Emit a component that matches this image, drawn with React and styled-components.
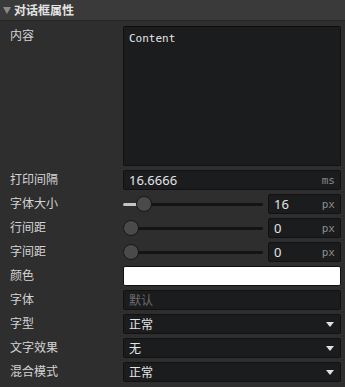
import React from "react";
import styled, { createGlobalStyle } from "styled-components";

const GlobalStyle = createGlobalStyle`
  html, body {
    margin: 0;
    padding: 0;
    background: #2e2e2e;
  }
  * { box-sizing: border-box; }
`;

const Panel = styled.div`
  width: 345px;
  height: 387px;
  background: #2e2e2e;
  font-family: "Noto Sans", "Noto Sans CJK SC", sans-serif;
  color: #d6d6d6;
`;

const Header = styled.div`
  height: 21px;
  display: flex;
  align-items: center;
  gap: 3px;
  padding-left: 3px;
  background: #3a3a3a;
  border-bottom: 1px solid #262626;
  font-size: 12px;
  font-weight: bold;
  color: #e4e4e4;
`;

const Caret = styled.span`
  width: 0;
  height: 0;
  border-left: 4.5px solid transparent;
  border-right: 4.5px solid transparent;
  border-top: 7px solid #8a8a8a;
`;

const Body = styled.div`
  display: flex;
  flex-direction: column;
  gap: 4px;
  padding: 5px 4px 0 10px;
`;

const Row = styled.div`
  display: grid;
  grid-template-columns: 113px 1fr;
  align-items: ${(p) => (p.$top ? "start" : "center")};
  min-height: 20px;
`;

const Label = styled.div`
  font-size: 12px;
  line-height: 20px;
  color: #d4d4d4;
`;

const TextArea = styled.div`
  height: 140px;
  background: #1b1c1e;
  border: 1px solid #111;
  border-top-color: #0c0c0c;
  border-radius: 2px;
  padding: 5px 5px;
  font-family: "DejaVu Sans Mono", monospace;
  font-size: 11px;
  color: #e6e6e6;
`;

const Field = styled.div`
  height: 20px;
  display: flex;
  align-items: center;
  justify-content: space-between;
  background: ${(p) => (p.$color ? p.$color : "#1b1c1e")};
  border: 1px solid #111;
  border-radius: 2px;
  padding: 0 5px 0 5px;
  font-size: ${(p) => (p.$cjk ? "12px" : "13px")};
  color: ${(p) => (p.$muted ? "#6c6c6c" : "#e4e4e4")};
  width: ${(p) => (p.$w ? p.$w : "auto")};
`;

const Unit = styled.span`
  font-family: "DejaVu Sans Mono", monospace;
  font-size: 11px;
  color: #8c8c8c;
`;

const SliderRow = styled.div`
  display: flex;
  align-items: center;
  gap: 5px;
`;

const Track = styled.div`
  position: relative;
  flex: 1;
  height: 3px;
  background: #141414;
  border-radius: 2px;
`;

const Fill = styled.div`
  height: 3px;
  background: #c4c4c4;
  border-radius: 2px;
`;

const Thumb = styled.div`
  position: absolute;
  top: -7px;
  width: 16px;
  height: 16px;
  border-radius: 50%;
  background: #4a4a4a;
  border: 1px solid #161616;
`;

const Arrow = styled.span`
  width: 0;
  height: 0;
  border-left: 4px solid transparent;
  border-right: 4px solid transparent;
  border-top: 5px solid #e0e0e0;
  margin-right: 1px;
`;

const Slider = ({ pos, value }) => (
  <SliderRow>
    <Track>
      <Fill style={{ width: pos }} />
      <Thumb style={{ left: pos - 8 }} />
    </Track>
    <Field $w="73px">
      <span>{value}</span>
      <Unit>px</Unit>
    </Field>
  </SliderRow>
);

const Select = ({ value }) => (
  <Field $cjk>
    <span>{value}</span>
    <Arrow />
  </Field>
);

export default function App() {
  return (
    <Panel>
      <GlobalStyle />
      <Header>
        <Caret />
        对话框属性
      </Header>
      <Body>
        <Row $top>
          <Label>内容</Label>
          <TextArea>Content</TextArea>
        </Row>
        <Row>
          <Label>打印间隔</Label>
          <Field>
            <span>16.6666</span>
            <Unit>ms</Unit>
          </Field>
        </Row>
        <Row>
          <Label>字体大小</Label>
          <Slider pos={21} value="16" />
        </Row>
        <Row>
          <Label>行间距</Label>
          <Slider pos={8} value="0" />
        </Row>
        <Row>
          <Label>字间距</Label>
          <Slider pos={8} value="0" />
        </Row>
        <Row>
          <Label>颜色</Label>
          <Field $color="#ffffff" />
        </Row>
        <Row>
          <Label>字体</Label>
          <Field $cjk $muted>
            默认
          </Field>
        </Row>
        <Row>
          <Label>字型</Label>
          <Select value="正常" />
        </Row>
        <Row>
          <Label>文字效果</Label>
          <Select value="无" />
        </Row>
        <Row>
          <Label>混合模式</Label>
          <Select value="正常" />
        </Row>
      </Body>
    </Panel>
  );
}
